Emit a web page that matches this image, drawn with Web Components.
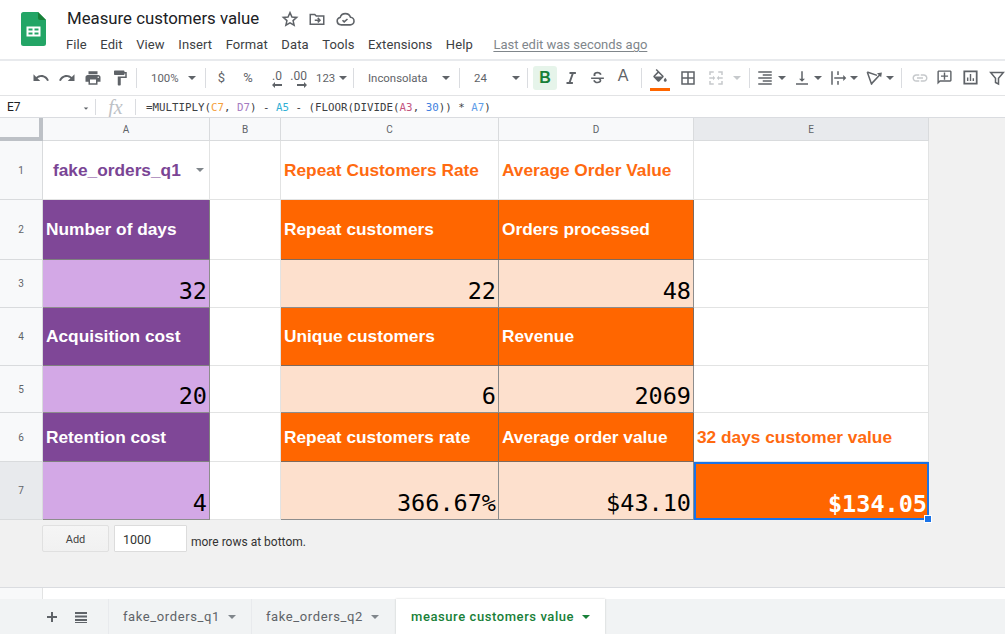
<!DOCTYPE html>
<html lang="en"><head><meta charset="utf-8"><title>Measure customers value</title>
<style>
html,body{margin:0;padding:0;height:100%;overflow:hidden;background:#fff}
body{font-family:Roboto,"Liberation Sans",sans-serif}
</style></head>
<body>
<sheet-app>
  <title-bar></title-bar>
  <tool-bar></tool-bar>
  <formula-bar></formula-bar>
  <sheet-grid>
    <sheet-cell kind="corner"></sheet-cell>
    <sheet-cell kind="col">A</sheet-cell><sheet-cell kind="col">B</sheet-cell><sheet-cell kind="col">C</sheet-cell><sheet-cell kind="col">D</sheet-cell><sheet-cell kind="col sel">E</sheet-cell>

    <sheet-cell kind="row">1</sheet-cell><sheet-cell kind="chip">fake_orders_q1</sheet-cell><sheet-cell></sheet-cell><sheet-cell kind="otext">Repeat Customers Rate</sheet-cell><sheet-cell kind="otext">Average Order Value</sheet-cell><sheet-cell></sheet-cell>

    <sheet-cell kind="row">2</sheet-cell><sheet-cell kind="phead">Number of days</sheet-cell><sheet-cell></sheet-cell><sheet-cell kind="ohead">Repeat customers</sheet-cell><sheet-cell kind="ohead">Orders processed</sheet-cell><sheet-cell></sheet-cell>

    <sheet-cell kind="row">3</sheet-cell><sheet-cell kind="pval">32</sheet-cell><sheet-cell></sheet-cell><sheet-cell kind="oval">22</sheet-cell><sheet-cell kind="oval">48</sheet-cell><sheet-cell></sheet-cell>

    <sheet-cell kind="row">4</sheet-cell><sheet-cell kind="phead">Acquisition cost</sheet-cell><sheet-cell></sheet-cell><sheet-cell kind="ohead">Unique customers</sheet-cell><sheet-cell kind="ohead">Revenue</sheet-cell><sheet-cell></sheet-cell>

    <sheet-cell kind="row">5</sheet-cell><sheet-cell kind="pval">20</sheet-cell><sheet-cell></sheet-cell><sheet-cell kind="oval">6</sheet-cell><sheet-cell kind="oval">2069</sheet-cell><sheet-cell></sheet-cell>

    <sheet-cell kind="row">6</sheet-cell><sheet-cell kind="phead">Retention cost</sheet-cell><sheet-cell></sheet-cell><sheet-cell kind="ohead">Repeat customers rate</sheet-cell><sheet-cell kind="ohead">Average order value</sheet-cell><sheet-cell kind="otext">32 days customer value</sheet-cell>

    <sheet-cell kind="row sel">7</sheet-cell><sheet-cell kind="pval">4</sheet-cell><sheet-cell></sheet-cell><sheet-cell kind="oval">366.67%</sheet-cell><sheet-cell kind="oval">$43.10</sheet-cell><sheet-cell kind="active">$134.05</sheet-cell>
  </sheet-grid>
  <add-rows></add-rows>
  <tab-bar></tab-bar>
</sheet-app>

<script>
const ICON = {
  undo:'<path d="M12.5 8c-2.65 0-5.05.99-6.9 2.6L2 7v9h9l-3.62-3.62c1.39-1.16 3.16-1.88 5.12-1.88 3.54 0 6.55 2.31 7.6 5.5l2.37-.78C21.08 11.03 17.15 8 12.5 8z"/>',
  redo:'<path d="M18.4 10.6C16.55 8.99 14.15 8 11.5 8c-4.65 0-8.58 3.03-9.96 7.22L3.9 16c1.05-3.19 4.05-5.5 7.6-5.5 1.95 0 3.73.72 5.12 1.88L13 16h9V7l-3.6 3.6z"/>',
  print:'<path d="M19 8H5c-1.66 0-3 1.34-3 3v6h4v4h12v-4h4v-6c0-1.66-1.34-3-3-3zm-3 11H8v-5h8v5zm3-7c-.55 0-1-.45-1-1s.45-1 1-1 1 .45 1 1-.45 1-1 1zm-1-9H6v4h12V3z"/>',
  paint:'<path d="M18 4V3c0-.55-.45-1-1-1H5c-.55 0-1 .45-1 1v4c0 .55.45 1 1 1h12c.55 0 1-.45 1-1V6h1v4H9v11c0 .55.45 1 1 1h2c.55 0 1-.45 1-1v-9h8V4h-3z"/>',
  italic:'<path d="M10 4v2.600h2.800L9 17.400H6V20h8.500v-2.600h-2.800l3.800-10.800H18.500V4z"/>',
  strike:'<path d="M6.300 8.500C6.300 5.700 8.800 4 12.100 4c2.800 0 5 1.200 5.700 3.700l-2.400.8c-.4-1.300-1.600-2.100-3.300-2.100-1.900 0-3.200.8-3.200 2.200 0 .5.200.9.500 1.300H6.700c-.3-.4-.4-1-.4-1.400zM3 12h18v2h-4.400c.5.700.8 1.400.8 2.200 0 2.600-2.400 3.900-5.400 3.900-3.100 0-5.400-1.400-6.100-4l2.400-.7c.4 1.600 1.900 2.500 3.700 2.500 1.800 0 3-.7 3-1.700 0-.9-.6-1.600-2-2.200H3z"/>',
  fill:'<path d="M16.560 8.940L7.620 0 6.210 1.410l2.380 2.380-5.150 5.150c-.59.59-.59 1.540 0 2.120l5.500 5.500c.29.290.68.440 1.060.440s.77-.15 1.060-.44l5.500-5.500c.59-.58.59-1.530 0-2.120zM5.210 10L10 5.210 14.790 10H5.210zM19 11.500s-2 2.170-2 3.500c0 1.100.9 2 2 2s2-.9 2-2c0-1.330-2-3.500-2-3.500z"/>',
  borders:'<path d="M3 3v18h18V3H3zm8 16H5v-6h6v6zm0-8H5V5h6v6zm8 8h-6v-6h6v6zm0-8h-6V5h6v6z"/>',
  merge:'<path d="M3 3h6v2H5v3H3zM15 3h6v5h-2V5h-4zM3 16h2v3h4v2H3zM19 16h2v5h-6v-2h4zM3 11h5V9l3 3-3 3v-2H3zM21 11h-5V9l-3 3 3 3v-2h5z"/>',
  align:'<path d="M3 21h18v-2H3v2zm6-4h12v-2H9v2zm-6-4h18v-2H3v2zm6-4h12V7H9v2zM3 3v2h18V3H3z"/>',
  valign:'<path d="M16 13h-3V3h-2v10H8l4 4 4-4zM4 19v2h16v-2H4z"/>',
  wrap:'<path d="M3 3h2v18H3zM11 3h2v5h-2zM11 16h2v5h-2zM7 11h12V8l4 4-4 4v-3H7z"/>',
  rotate:'<path d="M3 4l6 17M3 4l13 4.500M8.800 19.500L20.500 7" fill="none" stroke="currentColor" stroke-width="2"/><path d="M22.500 4.500l-1 6.500-5.500-5.500z"/>',
  link:'<path d="M3.900 12c0-1.710 1.390-3.100 3.100-3.100h4V7H7c-2.760 0-5 2.240-5 5s2.240 5 5 5h4v-1.900H7c-1.710 0-3.100-1.390-3.100-3.100zM8 13h8v-2H8v2zm9-6h-4v1.900h4c1.710 0 3.100 1.390 3.100 3.100s-1.390 3.100-3.100 3.100h-4V17h4c2.760 0 5-2.240 5-5s-2.240-5-5-5z"/>',
  comment:'<path d="M20 2H4c-1.100 0-2 .9-2 2v18l4-4h14c1.100 0 2-.9 2-2V4c0-1.100-.9-2-2-2zm0 14H5.170L4 17.170V4h16v12z"/><path d="M11 5h2v4h4v2h-4v4h-2v-4H7V9h4z"/>',
  chart:'<path d="M2 2h20v20H2zm2.500 2.500v15h15v-15z" fill-rule="evenodd"/><path d="M7 12h2v5H7zM11 7h2v10h-2zM15 13h2v4h-2z"/>',
  filter:'<path d="M3.500 4.500h17L14 12.500V20l-4-2v-5.500z" fill="none" stroke="currentColor" stroke-width="2" stroke-linejoin="miter"/>'
};
const svg = (n, s=18) => `<svg viewBox="0 0 24 24" width="${s}" height="${s}" fill="currentColor" aria-hidden="true">${ICON[n]}</svg>`;
const caret = (c='#5f6368') => `<span style="display:inline-block;width:0;height:0;border:4px solid transparent;border-top:4px solid ${c};border-bottom:0"></span>`;

class SheetApp extends HTMLElement{constructor(){super();this.attachShadow({mode:'open'}).innerHTML=`<style>:host{display:flex;flex-direction:column;width:1005px;height:634px;overflow:hidden;background:#f1f1f1}</style><slot></slot>`}}

class TitleBar extends HTMLElement{constructor(){super();this.attachShadow({mode:'open'}).innerHTML=`<style>
:host{display:flex;flex:none;height:59px;background:#fff;position:relative;box-sizing:border-box;font-family:Roboto,sans-serif}
.logo{margin:12px 0 0 21px;width:25px;height:34px;flex:none}
.txt{margin-left:21px;padding-top:9px;display:flex;flex-direction:column}
.top{display:flex;align-items:center;height:21px}
h1{font:400 16.8px/21px Roboto,sans-serif;margin:0;color:#202124;width:215px;white-space:nowrap;margin-top:-2px}
.top svg{color:#5f6368;flex:none}
nav{display:flex;height:20px;margin-top:5px;font-size:13px;line-height:20px;color:#3c4043;align-items:center;letter-spacing:.1px;margin-left:-1px}
nav span{margin-right:13.500px}
nav a{margin-left:7px;color:#80868b;text-decoration:underline;text-underline-offset:2px;font-size:13px;letter-spacing:0;white-space:nowrap}
.hide{position:absolute;right:0;top:28px;width:5px;height:6px;overflow:hidden;color:#5f6368}
</style>
<svg class="logo" viewBox="0 0 25 34"><path d="M2.500 0H17l8 8v23.500a2.500 2.500 0 0 1-2.500 2.500h-20A2.500 2.500 0 0 1 0 31.500v-29A2.500 2.500 0 0 1 2.500 0z" fill="#23a566"/><path d="M17 0l8 8h-6a2 2 0 0 1-2-2z" fill="#188038"/><path d="M5.500 14.500h14v10h-14zm2 2v2h4v-2zm6 0v2h4v-2zm-6 4v2h4v-2zm6 0v2h4v-2z" fill="#fff" fill-rule="evenodd"/></svg>
<div class="txt">
 <div class="top"><h1>Measure customers value</h1>
  <svg width="18" height="18" viewBox="0 0 24 24" fill="none" stroke="currentColor" stroke-width="2" style="margin-left:-1px;margin-top:-2px"><path d="M12 3.500l2.600 5.800 6.300.6-4.800 4.200 1.400 6.200L12 17.100l-5.500 3.200 1.400-6.200-4.800-4.200 6.300-.6z"/></svg>
  <svg width="18" height="18" viewBox="0 0 24 24" fill="none" stroke="currentColor" stroke-width="2" style="margin-left:9px;margin-top:-2px"><path d="M3 6h6l2 2h10v11H3z"/><path d="M9 13.500h6M13 10.500l3 3-3 3"/></svg>
  <svg width="20" height="20" viewBox="0 0 24 24" fill="none" stroke="currentColor" stroke-width="1.900" style="margin-left:9px;margin-top:-1px"><path d="M7 19a4.500 4.500 0 0 1-.8-8.900A6.500 6.500 0 0 1 18.600 10 4.500 4.500 0 0 1 18 19z"/><path d="M9 13.500l2 2 4-3.500"/></svg>
 </div>
 <nav><span>File</span><span>Edit</span><span>View</span><span>Insert</span><span>Format</span><span>Data</span><span>Tools</span><span>Extensions</span><span>Help</span><a>Last edit was seconds ago</a></nav>
</div>
<div class="hide"><svg width="10" height="6" viewBox="0 0 10 6" fill="none" stroke="currentColor" stroke-width="1.500"><path d="M0 5l5-4 5 4"/></svg></div>`}}

class ToolBar extends HTMLElement{constructor(){super();
 const sep=w=>`<i class="sep" style="width:${w}px"></i>`;
 const ic=(n,w,s=18,ml=0,col='')=>`<b class="it" style="width:${w}px;margin-left:${ml}px;${col?`color:${col}`:''}">${svg(n,s)}</b>`;
 const tx=(t,w,st='')=>`<b class="it t" style="width:${w}px;${st}">${t}</b>`;
 const car=(w,ml=0,c)=>`<b class="it" style="width:${w}px;margin-left:${ml}px">${caret(c)}</b>`;
 const dd=(t,w,pl,pr)=>`<b class="it dd" style="width:${w}px;padding:0 ${pr}px 0 ${pl}px">${t}${caret()}</b>`;
 const dec=(t,w,d,pr)=>`<b class="it dec" style="width:${w}px;padding-right:${pr}px">${t}<svg width="10" height="6" viewBox="0 0 10 6" fill="currentColor"><path d="${d}"/></svg></b>`;
 this.attachShadow({mode:'open'}).innerHTML=`<style>
:host{display:flex;height:37px;box-sizing:border-box;background:#fff;border-top:2px solid #e8eaed;border-bottom:1px solid #e2e3e5;padding:0 0 1px 27px;align-items:center;overflow:hidden;color:#5f6368;font-family:Roboto,sans-serif;flex:none}
.it{flex:none;display:flex;align-items:center;justify-content:center;height:24px;font-weight:400;box-sizing:border-box;font-size:11.4px;color:#5f6368}
.dd{justify-content:space-between}
.dec{flex-direction:column;align-items:flex-end;font-size:12px;line-height:12px;padding-top:3px}
.sep{flex:none;height:20px;display:block;background:linear-gradient(#dadce0,#dadce0) center/1px 100% no-repeat}
.bold{background:#e6f4ea;color:#188038;border-radius:3px;font:700 16px "Liberation Sans",sans-serif;margin-left:3px}
.f{flex-direction:column;position:relative}
.f u{position:absolute;left:4px;right:4px;bottom:-1px;height:3px;background:#ff6600}
</style>
${ic('undo',27)}${ic('redo',26)}${ic('print',26)}${ic('paint',27)}${sep(7)}
${dd('100%',63,11,7)}${sep(5)}
${tx('$',27,'font-size:13px')}${tx('%',26,'font-size:13px')}${dec('.0',23,'M3 2h7v2H3v2L0 3l3-3z',2)}${dec('.00',28,'M0 2h7V0l3 3-3 3V4H0z',5)}
<b class="it dd" style="width:38px;padding:0 3px 0 4px">123${caret()}</b>${sep(6)}
${dd('Inconsolata',100,12,6)}${sep(6)}
${dd('24',62,12,4)}${sep(6)}
<b class="it bold" style="width:24px;color:#188038">B</b>${ic('italic',28,18)}${ic('strike',25,17)}<b class="it" style="width:26px;font:400 16px 'Liberation Sans',sans-serif;padding-bottom:4px">A</b>${sep(10)}
<b class="it f" style="width:28px">${svg('fill',18)}<u></u></b>${ic('borders',28)}
<b class="it" style="width:28px;color:#c6c9cc">${svg('merge',18)}</b><b class="it" style="width:14px">${caret('#c6c9cc')}</b>${sep(10)}
${ic('align',22)}${car(11)}${ic('valign',22,18,4)}${car(10)}${ic('wrap',23,18,3)}${car(9)}${ic('rotate',22,18,5)}${car(10)}${sep(13)}
<b class="it" style="width:23px;color:#c6c9cc">${svg('link',18)}</b>${ic('comment',27,17)}${ic('chart',25,17)}${ic('filter',28,18)}`}}

class FormulaBar extends HTMLElement{constructor(){super();this.attachShadow({mode:'open'}).innerHTML=`<style>
:host{display:flex;height:21px;align-items:center;background:#fff;flex:none;font-family:Roboto,sans-serif;padding-top:1px;box-sizing:border-box}
.ref{width:95px;box-sizing:border-box;padding:0 5px 0 7px;display:flex;justify-content:space-between;align-items:center;font-size:12px;color:#202124}
.ref span:last-child{transform:scale(.75)}
.sep{width:1px;height:16px;background:#dadce0;flex:none}
.fx{width:39px;text-align:center;font:italic 20px/20px "Liberation Serif",serif;color:#bdc1c6;flex:none}
.f{margin-left:10px;font:10.8px "DejaVu Sans Mono",monospace;color:#3c4043;white-space:pre}
.c{color:#f5a13c}.d{color:#a57bc2}.a{color:#31b0d5}.e{color:#c4557f}.n{color:#3f7fe0}.g{color:#5f9ee8}
</style>
<div class="ref"><span>E7</span><span>${caret()}</span></div><i class="sep"></i><div class="fx">fx</div><i class="sep"></i>
<div class="f">=MULTIPLY(<span class="c">C7</span>, <span class="d">D7</span>) - <span class="a">A5</span> - (FLOOR(DIVIDE(<span class="e">A3</span>, <span class="n">30</span>)) * <span class="g">A7</span>)</div>`}}

class SheetGrid extends HTMLElement{constructor(){super();this.attachShadow({mode:'open'}).innerHTML=`<style>
:host{display:grid;grid-template-columns:43px 167px 71px 218px 195px 235px;grid-template-rows:23px 59px 60px 48px 58px 47px 49px 58px;justify-content:start;background:#f1f1f1;border-top:1px solid #dadce0;position:relative;flex:none;height:402px;box-sizing:content-box;width:1005px}
</style><slot></slot>`}}

class SheetCell extends HTMLElement{
 constructor(){super();this.attachShadow({mode:'open'}).innerHTML=`<style>
:host{display:flex;box-sizing:border-box;background:#fff;border-right:1px solid #e2e3e3;border-bottom:1px solid #e2e3e3;min-width:0;position:relative;align-items:center;overflow:visible;font:700 17.3px "Liberation Sans",Arial,sans-serif;padding:0 3px;white-space:nowrap}
:host([kind~=col]),:host([kind~=row]){background:#f8f9fa;color:#5f6368;font:400 10px Roboto,sans-serif;justify-content:center;padding:0;border-color:#d9dbdd}
:host([kind~=sel]){background:#e8eaed}
:host([kind=corner]){background:#f8f9fa;border-right:4px solid #bdc1c6;border-bottom:4px solid #bdc1c6;padding:0}
:host([kind=otext]){color:#ff6a10}
:host([kind=phead]){background:#7f4797;color:#fff;border-color:#7f7f7f}
:host([kind=ohead]){background:#ff6600;color:#fff;border-color:#7f6a5c}
:host([kind=pval]),:host([kind=oval]),:host([kind=active]){align-items:flex-end;justify-content:flex-end;font:400 23.5px/30px "DejaVu Sans Mono",monospace;color:#000;padding:0 2px 1px 0}
:host([kind=pval]){background:#d3a8e6;border-color:#8d8d8d}
:host([kind=oval]){background:#fde0cd;border-color:#8d8d8d}
:host([kind=active]){background:#ff6600;color:#fff;font-weight:700;outline:2px solid #1a73e8;outline-offset:-2px;border:0;padding-right:2px}
:host([kind=chip]){color:#7a4595;padding-left:10px;justify-content:space-between}
.drop{display:none;margin-right:2px}
:host([kind=chip]) .drop{display:inline-flex}
.handle{display:none;position:absolute;right:-3px;bottom:-3px;width:6px;height:6px;background:#1a73e8;border:1px solid #fff}
:host([kind=active]) .handle{display:block}
</style><slot></slot><span class="drop">${caret('#80868b')}</span><i class="handle"></i>`}}

class AddRows extends HTMLElement{constructor(){super();this.attachShadow({mode:'open'}).innerHTML=`<style>
:host{display:block;flex:none;height:67px;box-sizing:border-box;background:#f1f1f1;padding:5px 0 0 42px;font-family:Roboto,sans-serif}
.row{display:flex;align-items:center;height:27px}
.btn{width:67px;height:27px;box-sizing:border-box;border:1px solid #e0e0e0;border-radius:2px;font-size:11px;color:#444;display:flex;align-items:center;justify-content:center;padding-top:1px;background:linear-gradient(#f5f5f5,#f1f1f1)}
.in{width:73px;height:27px;box-sizing:border-box;margin-left:5px;background:#fff;border:1px solid #dcdcdc;border-radius:1px;font-size:12.500px;color:#333;padding:1px 0 0 8px;display:flex;align-items:center}
.m{margin-left:4px;font-size:12px;color:#333;padding-top:6px}
</style><div class="row"><div class="btn">Add</div><div class="in">1000</div><div class="m">more rows at bottom.</div></div>`}}

class TabBar extends HTMLElement{constructor(){super();this.attachShadow({mode:'open'}).innerHTML=`<style>
:host{display:block;flex:none;height:47px;background:#f1f3f4;font-family:Roboto,sans-serif}
.scroll{background:#fff;border-top:1px solid #dadce0;display:flex;height:11px}
.scroll i{width:43px;background:#f8f9fa;border-right:1px solid #e2e3e3;box-sizing:border-box;display:block}
.bar{display:flex;height:35px;align-items:stretch;background:#f1f3f4}
.tools{width:108px;box-sizing:border-box;display:flex;align-items:center;padding-left:45px;gap:15px;color:#5f6368}
.tab{box-sizing:border-box;display:flex;align-items:center;padding-left:14px;font-size:13px;letter-spacing:.6px;color:#5f6368;border-left:1px solid #e8eaed;white-space:nowrap}
.tab>span{margin-left:8px;display:flex}
.tab.on{background:#fff;color:#188038;font-weight:500;padding-left:15px;letter-spacing:.58px;border:0;box-shadow:0 0 2px rgba(60,64,67,.25)}
</style>
<div class="scroll"><i></i></div>
<div class="bar"><div class="tools">
 <svg width="14" height="14" viewBox="0 0 14 14" fill="currentColor"><path d="M6 2h2v4h4v2H8v4H6V8H2V6h4z"/></svg>
 <svg width="14" height="14" viewBox="0 0 14 14" fill="currentColor"><path d="M1 2h12v2H1zM1 5.500h12v2H1zM1 9h12v2H1zM1 12h12v1H1z"/></svg>
</div>
<div class="tab" style="width:143px">fake_orders_q1<span>${caret('#80868b')}</span></div>
<div class="tab" style="width:145px">fake_orders_q2<span>${caret('#80868b')}</span></div>
<div class="tab on" style="width:209px">measure customers value<span>${caret('#188038')}</span></div>
</div>`}}

customElements.define('sheet-app',SheetApp);
customElements.define('title-bar',TitleBar);
customElements.define('tool-bar',ToolBar);
customElements.define('formula-bar',FormulaBar);
customElements.define('sheet-grid',SheetGrid);
customElements.define('sheet-cell',SheetCell);
customElements.define('add-rows',AddRows);
customElements.define('tab-bar',TabBar);
</script>
</body></html>
